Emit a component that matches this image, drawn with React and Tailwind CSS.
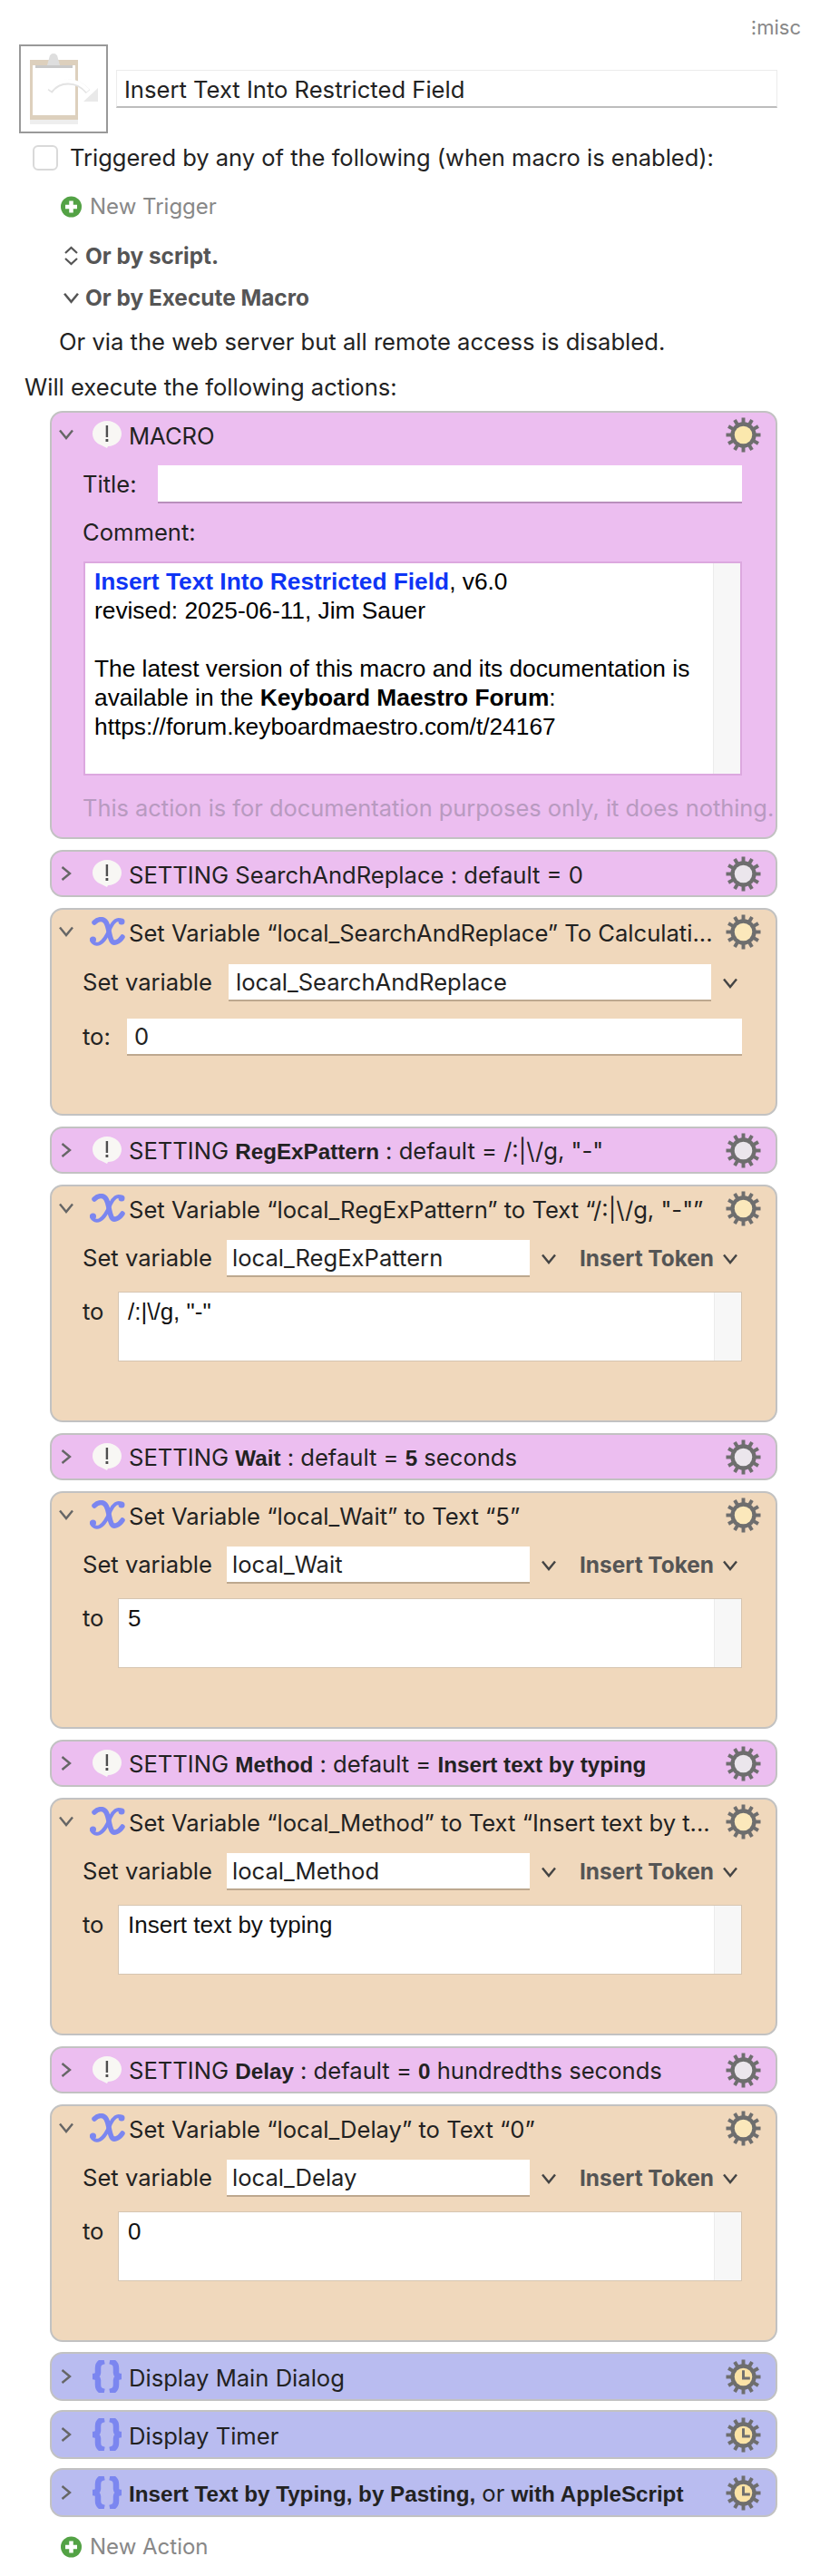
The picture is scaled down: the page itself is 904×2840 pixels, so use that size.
const ui = { fontFamily: "Inter, sans-serif" };
const tight = { fontFamily: "'Liberation Sans', sans-serif" };

function Gear({ kind }) {
  const teeth = [0, 30, 60, 90, 120, 150, 180, 210, 240, 270, 300, 330];
  const center = { macro: "#fbe8ad", setting: "#ebe6ec", var: "#fbe8bb", clock: "#fbe3a6" }[kind];
  return (
    <svg width="39" height="39" viewBox="0 0 40 40" className="shrink-0">
      {teeth.map((a) => (
        <rect key={a} x="18" y="0.500" width="4" height="8" fill="#6e6e6e" transform={`rotate(${a} 20 20)`} />
      ))}
      <circle cx="20" cy="20" r="14.500" fill="#6e6e6e" />
      <circle cx="20" cy="20" r="10" fill={center} />
      {kind === "clock" && <path d="M20 12.500V21.500H27.500" fill="none" stroke="#6e6e6e" strokeWidth="3" />}
    </svg>
  );
}

function Bubble() {
  return (
    <svg width="34" height="32" viewBox="0 0 34 32" className="shrink-0">
      <path d="M17 1C8 1 1 7.500 1 15C1 21 5 26 11 28L17 31L18 29C27 29 33 22.500 33 15C33 7.500 26 1 17 1Z" fill="#f8f7f4" />
      <rect x="15.700" y="6" width="2.400" height="13" fill="#4f4f4f" />
      <rect x="15.500" y="21" width="2.800" height="3" fill="#4f4f4f" />
    </svg>
  );
}

function XIcon() {
  return (
    <svg width="40" height="32" viewBox="0 0 40 32" className="shrink-0">
      <path d="M36 4C31 1 27 5 24 11C21 18 18 26 12 29C8 31 4 29 3 25" fill="none" stroke="#7b86f0" strokeWidth="4" strokeLinecap="round" />
      <path d="M6 6C10 2 16 1 19 6C22 11 22 20 25 26C27 30 33 28 37 22" fill="none" stroke="#7b86f0" strokeWidth="5.500" strokeLinecap="round" />
      <circle cx="36" cy="5" r="3.500" fill="#7b86f0" />
      <circle cx="4.500" cy="25" r="3.500" fill="#7b86f0" />
    </svg>
  );
}

function Braces() {
  return (
    <svg width="36" height="36" viewBox="0 0 36 36" className="shrink-0">
      <path d="M15 1C10 2 8 4 8 9V14C8 16 6 18 2 18C6 18 8 20 8 22V27C8 32 10 34 15 35" fill="none" stroke="#7b86f0" strokeWidth="6.500" />
      <path d="M21 1C26 2 28 4 28 9V14C28 16 30 18 34 18C30 18 28 20 28 22V27C28 32 26 34 21 35" fill="none" stroke="#7b86f0" strokeWidth="6.500" />
    </svg>
  );
}

function Chevron({ open, size = 16, color = "#666" }) {
  return (
    <svg width={size} height={size} viewBox="0 0 16 16" className="shrink-0">
      <path d={open ? "M1 3.500L8 12L15 3.500" : "M3.500 1L12 8L3.500 15"} fill="none" stroke={color} strokeWidth="2.400" />
    </svg>
  );
}

function PlusIcon() {
  return (
    <svg width="23" height="24" viewBox="0 0 23 24" className="shrink-0">
      <circle cx="11.500" cy="12" r="11.500" fill="#53a245" />
      <path d="M11.500 5.500V18.500M5 12H18" stroke="#fff" strokeWidth="4.500" />
    </svg>
  );
}

function ClipboardIcon() {
  return (
    <svg width="94" height="94" viewBox="0 0 94 94">
      <rect x="10" y="81" width="53" height="5" fill="#eeeeee" />
      <rect x="10" y="15" width="53" height="66" fill="#ddd0bd" />
      <rect x="13" y="21" width="47" height="55" fill="#fff" />
      <rect x="16" y="21" width="41" height="3" fill="#c9c9c9" />
      <circle cx="36" cy="12" r="4" fill="#dedede" />
      <path d="M29 21L32 10H40L43 21Z" fill="#dedede" />
      <path d="M32 50C42 36 62 36 74 50" fill="none" stroke="#e3e3e3" strokeWidth="6" />
      <path d="M32 48C42 35 62 35 74 49" fill="none" stroke="#fff" strokeWidth="4.500" />
      <path d="M85 46V61H69Z" fill="#e9e9e9" />
    </svg>
  );
}

function Header({ icon, gear, open, h = "h-[48px]", children }) {
  return (
    <div className={`flex items-center pl-[8px] pr-[16px] ${h}`}>
      <span className="w-[16px] flex justify-center">
        <Chevron open={open} />
      </span>
      <span className="ml-[17px] w-[40px] flex justify-center">{icon}</span>
      <span className="ml-[4px] min-w-0 flex-1 pt-[3px] text-[25.6px] leading-[30px] text-[#222] whitespace-nowrap">
        {children}
      </span>
      <Gear kind={gear} />
    </div>
  );
}

function Setting({ children }) {
  return (
    <div className="h-[52px] rounded-[14px] border-2 border-[#c2c2c2] bg-[#ecbef0]">
      <Header icon={<Bubble />} gear="setting">
        {children}
      </Header>
    </div>
  );
}

function B({ children }) {
  return (
    <span style={tight} className="font-bold text-[24.2px]">
      {children}
    </span>
  );
}

function Field({ w, h = "h-[41px]", pl = "pl-[8px]", border = "border-b-2 border-[#bda88f]", children }) {
  return (
    <div className={`bg-white text-[25.6px] leading-[39px] text-[#222] ${w} ${h} ${pl} ${border}`}>{children}</div>
  );
}

function VarCard({ title, name, value }) {
  return (
    <div className="h-[262px] rounded-[14px] border-2 border-[#c2c2c2] bg-[#f0d8bc]">
      <Header icon={<XIcon />} gear="var" open>
        {title}
      </Header>
      <div className="flex items-center mt-[11px] h-[41px] pl-[34px] text-[25.6px] text-[#222]">
        <span className="w-[159px]">Set variable</span>
        <Field w="w-[334px]" pl="pl-[6px]">
          {name}
        </Field>
        <span className="ml-[13px]">
          <Chevron open color="#444" />
        </span>
        <span className="ml-[26px] w-[148px] text-[24.4px] font-bold text-[#555]">Insert Token</span>
        <span className="ml-[10px]">
          <Chevron open color="#444" />
        </span>
      </div>
      <div className="flex items-start mt-[16px] pl-[34px] text-[25.6px] text-[#222]">
        <span className="w-[39px] leading-[44px]">to</span>
        <div className="flex w-[688px] h-[77px] bg-white border border-[#d6c5b1]">
          <div style={tight} className="flex-1 pl-[10px] pt-[4px] text-[26px] leading-[34px] text-[#111]">
            {value}
          </div>
          <div className="w-[30px] bg-[#f7f7f7] border-l border-[#ececec]" />
        </div>
      </div>
    </div>
  );
}

function BlueCard({ children }) {
  return (
    <div className="h-[54px] rounded-[14px] border-2 border-[#c2c2c2] bg-[#b9bcf0]">
      <Header icon={<Braces />} gear="clock" h="h-[50px]">
        {children}
      </Header>
    </div>
  );
}

export default function App() {
  return (
    <div style={ui} className="w-[904px] h-[2840px] bg-white text-[#222] overflow-hidden">
      {/* TOP */}
      <div className="h-[49px] pr-[21px] pt-[17px] flex justify-end text-[22px] leading-[26px] text-[#888]">⁝misc</div>
      <div className="flex ml-[21px] h-[98px]">
        <div className="w-[98px] h-[98px] border-2 border-[#999] flex items-center justify-center">
          <ClipboardIcon />
        </div>
        <div className="ml-[9px] mt-[28px] w-[729px] h-[42px] pl-[8px] border border-[#ececec] border-b-2 border-b-[#bdbdbd] text-[25.6px] leading-[42px] text-[#222]">
          Insert Text Into Restricted Field
        </div>
      </div>

      <div className="flex items-center ml-[36px] mt-[13px] h-[28px]">
        <div className="w-[28px] h-[28px] bg-white rounded-[6px] border-2 border-[#d9d9d9]" />
        <span className="ml-[13px] text-[25.5px] text-[#222]">Triggered by any of the following (when macro is enabled):</span>
      </div>
      <div className="flex items-center ml-[67px] mt-[28px] h-[24px]">
        <PlusIcon />
        <span className="ml-[9px] text-[24px] text-[#888]">New Trigger</span>
      </div>
      <div className="flex items-center ml-[70px] mt-[30px] h-[24px] text-[24.4px] font-bold text-[#555]">
        <svg width="17" height="22" viewBox="0 0 17 22" className="shrink-0">
          <path d="M2 8L8.500 2L15 8M2 14L8.500 20L15 14" fill="none" stroke="#555" strokeWidth="2.200" />
        </svg>
        <span className="ml-[7px]">Or by script.</span>
      </div>
      <div className="flex items-center ml-[70px] mt-[22px] h-[24px] text-[24.4px] font-bold text-[#555]">
        <Chevron open size={17} color="#555" />
        <span className="ml-[7px]">Or by Execute Macro</span>
      </div>
      <div className="ml-[65px] mt-[25px] h-[24px] text-[25.6px] leading-[24px] text-[#222]">
        Or via the web server but all remote access is disabled.
      </div>
      <div className="ml-[27px] mt-[26px] h-[24px] text-[25.6px] leading-[24px] text-[#222]">Will execute the following actions:</div>

      {/* ACTIONS */}
      <div className="ml-[55px] w-[802px] mt-[14px] flex flex-col gap-[12px]">
        <div className="h-[472px] rounded-[14px] border-2 border-[#c2c2c2] bg-[#ecbef0] overflow-hidden">
          <Header icon={<Bubble />} gear="macro" open>
            MACRO
          </Header>
          <div className="flex items-center mt-[10px] pl-[34px] text-[25.6px] text-[#222]">
            <span className="w-[83px]">Title:</span>
            <div className="w-[644px] h-[42px] bg-white border-b-2 border-[#b98fbc]" />
          </div>
          <div className="mt-[20px] pl-[34px] h-[24px] text-[25.6px] leading-[24px] text-[#222]">Comment:</div>
          <div
            style={tight}
            className="flex ml-[35px] mt-[20px] w-[726px] h-[236px] bg-white border-2 border-[#dca8df] text-[26.3px] leading-[32px] text-black"
          >
            <div className="flex-1 pl-[10px] pt-[4px] whitespace-nowrap">
              <div>
                <span className="font-bold text-[#0f35f5]">Insert Text Into Restricted Field</span>, v6.0
              </div>
              <div>revised: 2025-06-11, Jim Sauer</div>
              <div className="h-[32px]" />
              <div>The latest version of this macro and its documentation is</div>
              <div>
                available in the <span className="font-bold">Keyboard Maestro Forum</span>:
              </div>
              <div>https://forum.keyboardmaestro.com/t/24167</div>
            </div>
            <div className="w-[30px] bg-[#f7f7f7] border-l border-[#ececec]" />
          </div>
          <div className="mt-[24px] pl-[34px] h-[24px] text-[25.4px] leading-[24px] text-[#b89ac0] whitespace-nowrap">
            This action is for documentation purposes only, it does nothing.
          </div>
        </div>

        <Setting>SETTING SearchAndReplace : default = 0</Setting>

        <div className="h-[229px] rounded-[14px] border-2 border-[#c2c2c2] bg-[#f0d8bc]">
          <Header icon={<XIcon />} gear="var" open>
            Set Variable “local_SearchAndReplace” To Calculati...
          </Header>
          <div className="flex items-center mt-[12px] h-[41px] pl-[34px] text-[25.6px] text-[#222]">
            <span className="w-[161px]">Set variable</span>
            <Field w="w-[532px]">local_SearchAndReplace</Field>
            <span className="ml-[13px]">
              <Chevron open color="#444" />
            </span>
          </div>
          <div className="flex items-center mt-[19px] h-[41px] pl-[34px] text-[25.6px] text-[#222]">
            <span className="w-[49px]">to:</span>
            <Field w="w-[678px]">0</Field>
          </div>
        </div>

        <Setting>
          SETTING <B>RegExPattern</B> : default = /:|\/g, "-"
        </Setting>
        <VarCard title="Set Variable “local_RegExPattern” to Text “/:|\/g, &quot;-&quot;”" name="local_RegExPattern" value='/:|\/g, "-"' />

        <Setting>
          SETTING <B>Wait</B> : default = <B>5</B> seconds
        </Setting>
        <VarCard title="Set Variable “local_Wait” to Text “5”" name="local_Wait" value="5" />

        <Setting>
          SETTING <B>Method</B> : default = <B>Insert text by typing</B>
        </Setting>
        <VarCard title="Set Variable “local_Method” to Text “Insert text by t..." name="local_Method" value="Insert text by typing" />

        <Setting>
          SETTING <B>Delay</B> : default = <B>0</B> hundredths seconds
        </Setting>
        <VarCard title="Set Variable “local_Delay” to Text “0”" name="local_Delay" value="0" />

        <div className="flex flex-col gap-[10px] -mt-[1px]">
          <BlueCard>Display Main Dialog</BlueCard>
          <BlueCard>Display Timer</BlueCard>
          <BlueCard>
            <B>Insert Text by Typing, by Pasting,</B> or <B>with AppleScript</B>
          </BlueCard>
        </div>
      </div>

      <div className="flex items-center ml-[67px] mt-[21px] h-[24px]">
        <PlusIcon />
        <span className="ml-[9px] text-[24px] text-[#888]">New Action</span>
      </div>
    </div>
  );
}
